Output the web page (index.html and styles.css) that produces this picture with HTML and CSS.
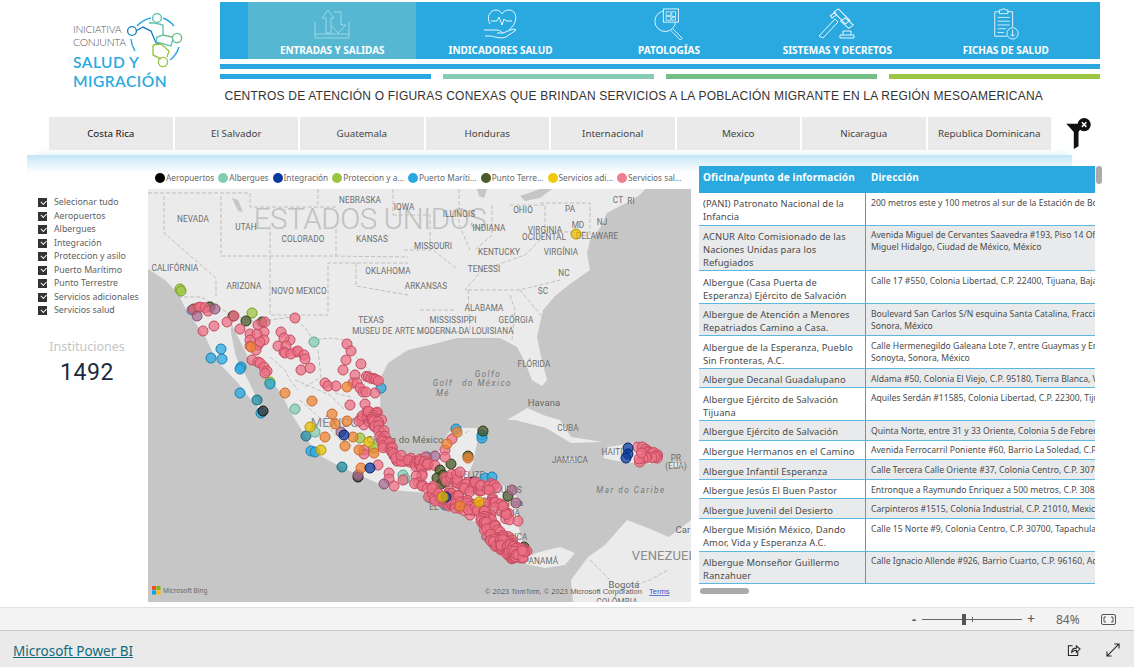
FILE: index.html
```html
<!DOCTYPE html>
<html lang="es">
<head>
<meta charset="utf-8">
<title>Iniciativa Conjunta Salud y Migración</title>
<link rel="stylesheet" href="styles.css">
</head>
<body>
<main class="report">
  <header class="top">
    <div class="logo">
      <div class="logo-small">
        <span>INICIATIVA</span>
        <span>CONJUNTA</span>
      </div>
      <div class="logo-big">
        <span>SALUD Y</span>
        <span>MIGRACIÓN</span>
      </div>
      <svg class="logo-mark" viewBox="0 0 56 56" fill="none" stroke-width="1.4">
        <path d="M10 13A26 26 0 0 1 24 5" stroke="#29a9e0"/>
        <path d="M36 5A26 26 0 0 1 47 13" stroke="#29a9e0"/>
        <path d="M52 34A26 26 0 0 1 43 47" stroke="#29a9e0"/>
        <path d="M8 38A26 26 0 0 1 4 26" stroke="#29a9e0"/>
        <circle cx="5" cy="18" r="4.4" stroke="#1f7fc4"/>
        <circle cx="30" cy="5" r="4.4" stroke="#5fc2b0"/>
        <circle cx="50" cy="25" r="4.6" stroke="#6cb98a"/>
        <circle cx="36" cy="49" r="4.6" stroke="#9bc646"/>
        <path d="M9 18L16 14L24 18L29 30L34 31" stroke="#1f7fc4"/>
        <path d="M22 10L28 10L36 12L36 22L30 24L29 29L44 33L46 26" stroke="#5fc2b0"/>
        <path d="M36 22L45 24" stroke="#6cb98a"/>
        <path d="M26 32L26 42L34 46M26 32L34 31L42 38L40 44" stroke="#9bc646"/>
      </svg>
    </div>
    <div class="head">
      <nav class="nav">
        <a class="nav-item is-active">
          <svg class="nav-icon" viewBox="0 0 36 30" fill="none" stroke="currentColor">
            <path d="M1 13V29H35V13M1 25H35"/>
            <path d="M12 24V9H8L14 1L20 9H17V24Z"/>
            <path d="M20 3H27V16H32L24 24L18 17"/>
          </svg>
          <span>ENTRADAS Y SALIDAS</span>
        </a>
        <a class="nav-item">
          <svg class="nav-icon" viewBox="0 0 36 30" fill="none" stroke="currentColor">
            <path d="M7 15C3 8 7 1 13 1C16 1 18 3 19 5C20 3 22 1 26 1C32 1 35 8 31 15C30 17 28 19 26 21"/>
            <path d="M8 12H14L16 8L19 16L21 10L23 12H29"/>
            <path d="M1 21H13C16 21 18 22 20 24H14M20 24L30 20L33 21L23 28C18 30 12 28 8 27H2"/>
          </svg>
          <span>INDICADORES SALUD</span>
        </a>
        <a class="nav-item">
          <svg class="nav-icon" viewBox="0 0 32 34" fill="none" stroke="currentColor">
            <circle cx="12" cy="14" r="11"/>
            <path d="M20 22L22 24L30 32L28 34L20 26L18 24"/>
            <rect x="10" y="1" width="16" height="14" fill="#29a9e0"/>
            <path d="M13 4H18V8H13ZM19 4H23V9H19ZM13 9H18V13H13ZM19 10H23V13H19Z" stroke-width=".8"/>
          </svg>
          <span>PATOLOGÍAS</span>
        </a>
        <a class="nav-item">
          <svg class="nav-icon" viewBox="0 0 36 30" fill="none" stroke="currentColor">
            <path d="M14 4L18 0L31 10L27 14ZM11 8L15 4L17 6L13 10ZM22 12L26 8L35 14L31 18Z" transform="rotate(8 20 10)"/>
            <path d="M16 10L19 13L4 29L0 27Z"/>
            <path d="M21 26H35V29H21ZM24 26V22H32V26"/>
          </svg>
          <span>SISTEMAS Y DECRETOS</span>
        </a>
        <a class="nav-item">
          <svg class="nav-icon" viewBox="0 0 30 34" fill="none" stroke="currentColor">
            <path d="M16 30H3V4H8M17 4H22V20"/>
            <path d="M8 6V2H11C11 0 14 0 14 2H17V6Z"/>
            <path d="M6 10H19M6 14H19M6 18H19M6 22H15M6 26H13" stroke-width=".9"/>
            <circle cx="22" cy="27" r="6"/>
            <path d="M22 23V30M20 28L22 30L24 28"/>
          </svg>
          <span>FICHAS DE SALUD</span>
        </a>
      </nav>
      <div class="rule rule-full"></div>
      <div class="rule-set">
        <div class="rule c-blue"></div>
        <div class="rule c-teal"></div>
        <div class="rule c-green"></div>
        <div class="rule c-lime"></div>
      </div>
      <h1 class="title">CENTROS DE ATENCIÓN O FIGURAS CONEXAS QUE BRINDAN SERVICIOS A LA POBLACIÓN MIGRANTE EN LA REGIÓN MESOAMERICANA</h1>
    </div>
  </header>

  <section class="band">
    <div class="tabs">
      <button class="tab tab-first">Costa Rica</button>
      <button class="tab">El Salvador</button>
      <button class="tab">Guatemala</button>
      <button class="tab">Honduras</button>
      <button class="tab">Internacional</button>
      <button class="tab">Mexico</button>
      <button class="tab">Nicaragua</button>
      <button class="tab">Republica Dominicana</button>
    </div>
    <svg class="clear-filter" viewBox="0 0 28 34">
      <path d="M1 6H20L14 15V30L9 33V15Z" fill="#111"/>
      <circle cx="20" cy="7" r="7" fill="#111"/>
      <path d="M17.6 4.6L22.4 9.4M22.4 4.6L17.6 9.4" stroke="#fff" stroke-width="1.6"/>
    </svg>
  </section>

  <section class="content">
    <aside class="side">
      <ul class="slicer">
        <li class="check">Selecionar tudo</li>
        <li class="check">Aeropuertos</li>
        <li class="check">Albergues</li>
        <li class="check">Integración</li>
        <li class="check">Proteccion y asilo</li>
        <li class="check">Puerto Marítimo</li>
        <li class="check">Punto Terrestre</li>
        <li class="check">Servicios adicionales</li>
        <li class="check">Servicios salud</li>
      </ul>
      <div class="kpi">
        <div class="kpi-label">Instituciones</div>
        <div class="kpi-value">1492</div>
      </div>
    </aside>

    <div class="mapcol">
      <ul class="legend">
        <li class="leg"><i class="swatch k-air"></i>Aeropuertos</li>
        <li class="leg"><i class="swatch k-alb"></i>Albergues</li>
        <li class="leg"><i class="swatch k-int"></i>Integración</li>
        <li class="leg"><i class="swatch k-pro"></i>Proteccion y a...</li>
        <li class="leg"><i class="swatch k-pue"></i>Puerto Maríti...</li>
        <li class="leg"><i class="swatch k-ter"></i>Punto Terre...</li>
        <li class="leg"><i class="swatch k-adi"></i>Servicios adi...</li>
        <li class="leg"><i class="swatch k-sal"></i>Servicios sal...</li>
      </ul>
      <svg id="map" class="map" viewBox="148 189 543 413">
        <rect x="148" y="189" width="543" height="413" class="water"/>
        <path class="land" d="M148 189H645L643 192L633 200L620 206L607 213L600 228L590 240L587 253L590 270L570 284L555 296L543 310L537 337L540 352L547 380L542 386L532 380L525 362L517 347L500 338L457 338L430 345L408 350L388 363L381 377L380 395L381 430L395 450L403 457L427 457L440 450L448 433L457 428L477 428L477 443L473 463L467 477L487 480L507 487L517 497L518 525L523 543L523 557L547 550L560 547L575 553L565 565L545 568L530 565L520 563L493 543L477 523L447 507L427 493L391 490L375 482L341 467L315 453L308 440L291 413L281 393L268 377L248 357L231 323L231 333L236 357L248 380L261 407L261 411L251 400L238 383L216 360L206 338L186 310L178 293L165 280L148 269Z"/>
        <path class="land" d="M573 602L571 580L588 557L605 545L627 520L648 528L669 537L691 520V602Z"/>
        <path class="land" d="M507 420L527 408L546 416L560 420L571 437L603 442L571 443L546 428L515 420Z"/>
        <path class="land" d="M603 458L608 447L634 443L662 456L650 464L625 462L612 460Z"/>
        <path class="land" d="M562 458L574 458L576 462L565 462Z"/>
        <path class="land" d="M670 463L683 463L683 467L670 467Z"/>
        <path class="lake" d="M477 189H487L484 198L479 196Z"/>
        <path class="lake" d="M520 196L540 189H552L540 198L525 201Z"/>
        <path class="lake" d="M232 198L238 200L243 212L238 211Z"/>
        <g class="borders">
          <path d="M148 193H250V207H336M318 189V206M164 196V233L216 278V296M221 196V256H328L408 257M270 226V315H328V263H408M336 229V256M356 263V286L408 295M393 189V215M393 215H430V250"/>
          <path d="M178 297H201L228 313L258 323L270 320L291 317L305 327L313 340L330 338L345 340L358 360L375 375"/>
          <path d="M404 250L433 250L456 268M459 189V225L470 250M492 205V235L475 250M510 205H545V235L525 255L482 270L465 290H520L560 280M510 295L515 310L512 340M468 290L470 332M520 290L545 320M420 310H455M420 332H470M540 203H590V235M552 232H590"/>
          <path d="M270 357L285 370L290 380L298 390M318 350L321 377L305 387M335 393L351 397M300 400L322 420L340 440L370 455M295 380L330 395L345 410M410 470L425 485L445 497M462 470L458 495M485 490L470 505M505 540L490 520M540 565L525 545M590 560L620 590L650 580L668 570M455 440L470 430"/>
        </g>
        <text class="lbl-huge" x="370" y="229">ESTADOS UNIDOS</text>
        <g id="labels" class="lbl"></g>
        <g id="pins"></g>
        <rect x="152" y="586" width="4" height="4" fill="#f25022"/>
        <rect x="156.500" y="586" width="4" height="4" fill="#7fba00"/>
        <rect x="152" y="590.500" width="4" height="4" fill="#00a4ef"/>
        <rect x="156.500" y="590.500" width="4" height="4" fill="#ffb900"/>
        <text class="bing" x="163" y="593">Microsoft Bing</text>
        <text class="copy" x="485" y="594">© 2023 TomTom, © 2023 Microsoft Corporation</text>
        <text class="terms" x="649" y="594">Terms</text>
      </svg>
    </div>

    <div class="tablecol">
      <div class="table">
        <div class="row row-head"><div class="c1">Oficina/punto de información</div><div class="c2">Dirección</div></div>
        <div class="row"><div class="c1">(PANI) Patronato Nacional de la Infancia</div><div class="c2">200 metros este y 100 metros al sur de la Estación de Bomberos</div></div>
        <div class="row alt"><div class="c1">ACNUR Alto Comisionado de las Naciones Unidas para los Refugiados</div><div class="c2">Avenida Miguel de Cervantes Saavedra #193, Piso 14 Oficina 1402<br>Miguel Hidalgo, Ciudad de México, México</div></div>
        <div class="row"><div class="c1">Albergue (Casa Puerta de Esperanza) Ejército de Salvación</div><div class="c2">Calle 17 #550, Colonia Libertad, C.P. 22400, Tijuana, Baja California</div></div>
        <div class="row alt"><div class="c1">Albergue de Atención a Menores Repatriados Camino a Casa.</div><div class="c2">Boulevard San Carlos S/N esquina Santa Catalina, Fraccionamiento<br>Sonora, México</div></div>
        <div class="row"><div class="c1">Albergue de la Esperanza, Pueblo Sin Fronteras, A.C.</div><div class="c2">Calle Hermenegildo Galeana Lote 7, entre Guaymas y Emiliano Zapata<br>Sonoyta, Sonora, México</div></div>
        <div class="row alt"><div class="c1">Albergue Decanal Guadalupano</div><div class="c2">Aldama #50, Colonia El Viejo, C.P. 95180, Tierra Blanca, Veracruz</div></div>
        <div class="row"><div class="c1">Albergue Ejército de Salvación Tijuana</div><div class="c2">Aquiles Serdán #11585, Colonia Libertad, C.P. 22300, Tijuana, Baja</div></div>
        <div class="row alt"><div class="c1">Albergue Ejército de Salvación</div><div class="c2">Quinta Norte, entre 31 y 33 Oriente, Colonia 5 de Febrero, Puebla</div></div>
        <div class="row"><div class="c1">Albergue Hermanos en el Camino</div><div class="c2">Avenida Ferrocarril Poniente #60, Barrio La Soledad, C.P. 70110</div></div>
        <div class="row alt"><div class="c1">Albergue Infantil Esperanza</div><div class="c2">Calle Tercera Calle Oriente #37, Colonia Centro, C.P. 30700, Tapachula</div></div>
        <div class="row"><div class="c1">Albergue Jesús El Buen Pastor</div><div class="c2">Entronque a Raymundo Enriquez a 500 metros, C.P. 30820, Tapachula</div></div>
        <div class="row alt"><div class="c1">Albergue Juvenil del Desierto</div><div class="c2">Carpinteros #1515, Colonia Industrial, C.P. 21010, Mexicali, Baja</div></div>
        <div class="row"><div class="c1">Albergue Misión México, Dando Amor, Vida y Esperanza A.C.</div><div class="c2">Calle 15 Norte #9, Colonia Centro, C.P. 30700, Tapachula, Chiapas</div></div>
        <div class="row alt"><div class="c1">Albergue Monseñor Guillermo Ranzahuer</div><div class="c2">Calle Ignacio Allende #926, Barrio Cuarto, C.P. 96160, Acayucan</div></div>
      </div>
      <div class="vscroll"></div>
      <div class="hscroll"></div>
    </div>
  </section>
</main>

<div class="zoombar">
  <span class="zoom-minus">-</span>
  <div class="slider"><i class="slider-mid"></i><i class="slider-thumb"></i></div>
  <span class="zoom-plus">+</span>
  <span class="zoom-value">84%</span>
  <svg class="fit" viewBox="0 0 15 11" fill="none" stroke="#555">
    <rect x=".5" y=".5" width="14" height="10" rx="1.500"/>
    <path d="M5 3H3V8H5M10 3H12V8H10"/>
  </svg>
</div>

<footer class="footer">
  <a class="pbi">Microsoft Power BI</a>
  <div class="foot-icons">
    <svg class="foot-icon" viewBox="0 0 15 15" fill="none" stroke="#222" stroke-width="1.100">
      <path d="M6 3H1.500V13.500H11.500V9"/>
      <path d="M5 10C5 7 7 5.500 10 5.500V3L14 6.500L10 10V7.800C8 7.800 6.500 8.500 5 10Z"/>
    </svg>
    <svg class="foot-icon" viewBox="0 0 15 15" fill="none" stroke="#222" stroke-width="1.100">
      <path d="M1 14L14 1M9 1H14V6M1 9V14H6"/>
    </svg>
  </div>
</footer>
<script src="map.js"></script>
</body>
</html>
```
FILE: styles.css
```css
* { box-sizing: border-box; }
html, body { margin: 0; padding: 0; }
body {
  width: 1134px;
  height: 667px;
  overflow: hidden;
  background: #fff;
  font-family: "Noto Sans", "Open Sans", sans-serif;
  display: flex;
  flex-direction: column;
}
ul { list-style: none; margin: 0; padding: 0; }

.report { height: 607px; display: flex; flex-direction: column; overflow: hidden; }

/* header */
.top { display: flex; height: 117px; padding-top: 2px; }
.logo { width: 220px; position: relative; padding: 21px 0 0 73px; }
.logo-small span {
  display: block;
  font: 300 10.5px/13px "Lato", sans-serif;
  color: #555;
  letter-spacing: -.3px;
}
.logo-big { margin-top: 4px; }
.logo-big span {
  display: block;
  font: 600 15.5px/18.500px "Lato", sans-serif;
  color: #29a9e0;
  letter-spacing: .5px;
}
.logo-mark { position: absolute; left: 127px; top: 11px; width: 56px; height: 56px; }

.head { width: 880px; }
.nav {
  height: 57px;
  background: #29a9e0;
  padding-left: 28px;
  display: flex;
}
.nav-item {
  width: 168.4px;
  display: flex;
  flex-direction: column;
  align-items: center;
  color: #fff;
  font-size: 10px;
  font-weight: 700;
  line-height: 12px;
}
.nav-item span { margin-top: auto; padding-bottom: 3px; letter-spacing: -.05px; white-space: nowrap; }
.nav-item.is-active { background: #55b7d1; }
.nav-icon { width: 36px; height: 32px; margin-top: 6px; stroke-width: 1; opacity: .9; }
.is-active .nav-icon { color: #a5dbe6; }

.rule { height: 5px; }
.rule-full { background: #29a9e0; margin-top: 5px; }
.rule-set { display: flex; justify-content: space-between; margin-top: 5px; }
.rule-set .rule { flex: 0 0 211px; }
.c-blue { background: #29a9e0; }
.c-teal { background: #85cbb6; }
.c-green { background: #73bf85; }
.c-lime { background: #9dc544; }
.title {
  margin: 9.500px 0 0 4.500px;
  font: 400 12px/15px "Liberation Sans", Arial, sans-serif;
  color: #333;
  white-space: nowrap;
  letter-spacing: .22px;
}

/* tab band */
.band {
  position: relative;
  height: 38px;
  padding-left: 49px;
  display: flex;
}
.band::after {
  content: "";
  position: absolute;
  left: 27px;
  top: 38px;
  width: 1045px;
  height: 18px;
  background: linear-gradient(#c4e6f5, #fff);
  box-shadow: 4px -6px 8px -6px #cfeaf6;
  z-index: -1;
}
.tabs {
  width: 1002px;
  height: 32px;
  display: grid;
  grid-template-columns: repeat(8, 1fr);
  column-gap: 2px;
}
.tab {
  border: 0;
  padding: 1px 0 0;
  background: #eaeaea;
  color: #444;
  font: 400 9.800px/32px "Noto Sans", sans-serif;
  white-space: nowrap;
}
.tab-first { color: #111; }
.clear-filter { width: 27px; height: 32px; margin: 1px 0 0 14px; }

/* content */
.content { display: flex; margin-top: 11px; height: 441px; }
.side { width: 148px; padding-top: 30px; }
.slicer { padding-left: 38px; }
.check {
  position: relative;
  height: 13.500px;
  padding-left: 16px;
  font-size: 8.800px;
  line-height: 13.500px;
  color: #606060;
  white-space: nowrap;
}
.check::before {
  content: "";
  position: absolute;
  left: 0;
  top: 2px;
  width: 9px;
  height: 9px;
  background: #333;
}
.check::after {
  content: "";
  position: absolute;
  left: 2.500px;
  top: 3.500px;
  width: 4px;
  height: 2.500px;
  border-left: 1px solid #fff;
  border-bottom: 1px solid #fff;
  transform: rotate(-45deg);
}
.kpi { margin-top: 21px; text-align: center; width: 174px; }
.kpi-label { font-size: 12.500px; line-height: 16px; color: #c4c4c4; }
.kpi-value {
  font: 400 23px/32px "Roboto", sans-serif;
  color: #1c2a40;
  letter-spacing: .6px;
  margin-top: 2px;
}

.mapcol { width: 543px; }
.legend {
  height: 23px;
  padding: 5px 0 0 7px;
  display: flex;
  white-space: nowrap;
}
.leg {
  display: flex;
  align-items: center;
  height: 13px;
  margin-right: 4px;
  font-size: 8.250px;
  color: #666;
}
.swatch { width: 10px; height: 10px; border-radius: 50%; margin-right: 1px; }
.k-air { background: #000; }
.k-alb { background: #85cbb6; }
.k-int { background: #0a3a9e; }
.k-pro { background: #9dc544; }
.k-pue { background: #29a9e0; }
.k-ter { background: #4a5a28; }
.k-adi { background: #f2c80f; }
.k-sal { background: #ee7f90; }

.map { display: block; width: 543px; height: 413px; }
.water { fill: #c6c6c6; }
.land { fill: #ebebeb; }
.lake { fill: #c6c6c6; }
.borders path { fill: none; stroke: #b4b4b4; stroke-width: .8; stroke-dasharray: 4 2; }
.lbl text { font: 400 8.200px "Roboto", sans-serif; fill: #6e6e6e; text-anchor: middle; letter-spacing: .1px; }
.lbl .sea { font-style: italic; letter-spacing: 1.500px; fill: #777; }
.lbl .big { font-size: 13px; fill: #8a8a8a; }
.lbl .city { font-size: 9.500px; fill: #666; }
.lbl-huge { font: 300 29.500px "Roboto", sans-serif; fill: #c0c0c0; text-anchor: middle; letter-spacing: -.4px; }
.bing { font: 400 6.500px "Noto Sans", sans-serif; fill: #666; }
.copy { font: 400 7.500px "Liberation Sans", sans-serif; fill: #333; stroke: #fff; stroke-width: .1; }
.terms { font: 400 7.500px "Liberation Sans", sans-serif; fill: #3355cc; text-decoration: underline; }

.pin { fill-opacity: .75; stroke-width: 1; }
.p-sal { fill: #ec7084; stroke: #c44c60; }
.p-pue { fill: #29a9e0; stroke: #1780b0; }
.p-ter { fill: #4a5a28; stroke: #2d3a14; }
.p-int { fill: #0a3a9e; stroke: #04246e; }
.p-pro { fill: #9dc544; stroke: #78a020; }
.p-alb { fill: #85cbb6; stroke: #5fa890; }
.p-adi { fill: #e8bc00; stroke: #b89400; }
.p-ora { fill: #ee8434; stroke: #cc6a28; }
.p-pur { fill: #a86c90; stroke: #84506c; }
.p-tea { fill: #1f8aa0; stroke: #146a7c; }
.p-drk { fill: #333; stroke: #111; }

/* table */
.tablecol { position: relative; margin-left: 8px; width: 396px; }
.table { width: 396px; overflow: hidden; }
.row {
  display: grid;
  grid-template-columns: 167px 229px;
  border-bottom: 1px solid #5cb8e2;
  background: #fff;
}
.row.alt { background: #e9eaec; }
.c1 {
  padding: 4.400px 5px 1.200px 4px;
  font-size: 9.400px;
  line-height: 13px;
  color: #4a4a4a;
  letter-spacing: .1px;
  border-right: 1px solid #3aa5da;
}
.c2 {
  padding: 3.800px 0 0 5px;
  font-size: 8.600px;
  line-height: 12px;
  color: #4a4a4a;
  white-space: nowrap;
  overflow: hidden;
}
.row-head {
  height: 27px;
  background: #29a9e0;
  border-bottom: 0;
  color: #fff;
  font-weight: 700;
}
.row-head .c1, .row-head .c2 {
  padding: 4px 0 0 4px;
  font-size: 10px;
  line-height: 14px;
  color: #fff;
  border: 0;
  letter-spacing: .15px;
}
.row-head .c2 { padding-left: 5px; }
.vscroll {
  position: absolute;
  left: 397px;
  top: 0;
  width: 6px;
  height: 18px;
  border-radius: 3px;
  background: #aaa;
}
.hscroll {
  position: absolute;
  left: 1px;
  top: 422px;
  width: 49px;
  height: 6px;
  border-radius: 3px;
  background: #aaa;
}

/* bottom bars */
.zoombar {
  height: 24px;
  background: #f3f3f3;
  border-top: 1px solid #e0e0e0;
  border-bottom: 1px solid #c8c8c8;
  display: flex;
  align-items: center;
  padding-left: 912px;
  color: #555;
}
.zoom-minus { width: 10px; font-size: 13px; font-weight: 700; line-height: 20px; }
.slider { position: relative; width: 100px; height: 1px; background: #666; }
.slider-mid { position: absolute; left: 50px; top: -2px; width: 1px; height: 5px; background: #666; }
.slider-thumb { position: absolute; left: 40px; top: -5px; width: 4px; height: 11px; background: #555; }
.zoom-plus { margin-left: 5px; width: 29px; font-size: 14px; line-height: 20px; }
.zoom-value { width: 45px; font-size: 12px; color: #666; }
.fit { width: 15px; height: 11px; margin-left: 0; }
.footer {
  flex: 1;
  background: #eaeaea;
  display: flex;
  align-items: center;
  justify-content: space-between;
  padding: 3px 14px 0 13px;
}
.pbi { font-size: 13.500px; color: #106c7a; text-decoration: underline; }
.foot-icons { display: flex; gap: 25px; margin-top: -2px; }
.foot-icon { width: 14px; height: 14px; display: block; }
```
FILE: map.js
```js
(function () {
  var NS = "http://www.w3.org/2000/svg";
  var labels = [
    ["NEVADA",193,222],["UTAH",246,230],["COLORADO",303,242],["KANSAS",372,242],["NEBRASKA",360,203],
    ["OKLAHOMA",388,274],["CALIFÓRNIA",175,271],["ARIZONA",244,289],["NOVO MEXICO",299,294],["TEXAS",371,323],
    ["MUSEU DE ARTE MODERNA DA LOUISIANA",433,334],["MISSOURI",433,249],["ILLINOIS",459,217],["INDIANA",489,231],
    ["OHIO",523,213],["PA",570,212],["MD",578,228],["NJ",602,225],["CT",618,203],["RI",631,204],["DELAWARE",597,239],
    ["VIRGINIA",545,233],["OCIDENTAL",544,240],["KENTUCKY",499,255],["VIRGÍNIA",561,255],["TENESSI",484,272],
    ["NC",564,276],["ARKANSAS",426,289],["SC",543,294],["ALABAMA",484,311],["MISSISSIPPI",453,323],["GEÓRGIA",516,323],
    ["FLÓRIDA",534,367],["IOWA",404,210],["CUBA",568,431],["HAITI",612,455],["JAMAICA",570,463],["PR",676,461],
    ["(EUA)",676,469],["BELIZE",471,478],["HONDURAS",500,493],["EL",434,510],["NICARAGUA",497,516],["COSTA RICA",504,540],
    ["PANAMÁ",541,564],["COLÔMBIA",617,605]
  ];
  var extra = [
    ["Golfo",488,377,"sea"],["Golf",443,386,"sea"],["do México",487,386,"sea"],["Mé",443,396,"sea"],["Mar do Caribe",631,493,"sea"],
    ["VENEZUELA",668,560,"big"],["MÉXICO",335,427,"big"],["Cidade do México",405,443,"city"],["Havana",544,406,"city"],
    ["Tegucigalpa",497,506,"city"],["Bogotá",624,588,"city"],["Car",683,533,"city"]
  ];
  var lg = document.getElementById("labels");
  function addLabel(l) {
    var t = document.createElementNS(NS, "text");
    t.setAttribute("x", l[1]);
    t.setAttribute("y", l[2]);
    if (l[3]) t.setAttribute("class", l[3]);
    t.textContent = l[0];
    lg.appendChild(t);
  }
  labels.forEach(addLabel);
  extra.forEach(addLabel);

  var g = document.getElementById("pins");
  function pin(x, y, k) {
    var c = document.createElementNS(NS, "circle");
    c.setAttribute("cx", x.toFixed(1));
    c.setAttribute("cy", y.toFixed(1));
    c.setAttribute("r", "5");
    c.setAttribute("class", "pin p-" + k);
    g.appendChild(c);
  }
  function many(k, pts) { for (var i = 0; i < pts.length; i += 2) pin(pts[i], pts[i + 1], k); }

  var seed = 12345;
  function rnd() { seed = (seed * 16807) % 2147483647; return seed / 2147483647 - .5; }
  function chain(path, step, spread) {
    for (var i = 0; i < path.length - 2; i += 2) {
      var dx = path[i + 2] - path[i], dy = path[i + 3] - path[i + 1];
      var len = Math.sqrt(dx * dx + dy * dy), n = Math.max(1, Math.round(len / step));
      for (var j = 0; j < n; j++) {
        pin(path[i] + dx * j / n + rnd() * spread, path[i + 1] + dy * j / n + rnd() * spread, "sal");
      }
    }
  }

  many("pro", [180,289, 181,291, 252,313, 270,382, 360,438, 374,448]);
  many("pue", [192,310, 221,349, 211,358, 222,359, 241,367, 240,369, 240,393, 381,388, 311,451, 315,452, 427,457, 456,429, 482,435, 482,438, 473,487, 485,478, 492,477, 431,498, 445,505, 261,413, 270,384]);
  many("drk", [263,411, 358,477]);
  many("ter", [194,309, 210,307, 233,316, 246,321, 262,322, 451,464, 483,431, 468,456, 508,496, 524,547]);
  many("tea", [257,400, 306,436, 342,467]);
  many("alb", [314,342, 295,409, 315,432, 403,475, 405,479]);

  chain([194,309, 208,307], 4, 2);
  many("sal", [208,311, 203,331, 214,326, 227,322, 234,316, 240,329, 250,334, 250,340, 250,346, 258,325, 265,322, 264,332, 264,340, 257,334, 258,345, 260,342, 256,350, 295,318,
    281,332, 290,340, 284,338, 278,346, 286,346, 284,352, 296,352, 285,353, 291,354, 298,351, 304,355, 305,359, 301,370, 310,368,
    252,360, 258,362, 260,363, 264,367, 267,371, 265,373, 347,344, 351,351, 346,360, 343,370, 361,364, 355,375, 375,393,
    325,383, 328,386, 336,386, 353,383, 357,383, 360,388, 363,392, 366,392, 350,405, 365,404, 378,465, 389,473, 389,479, 394,486, 403,480, 364,450, 364,454, 452,439, 445,450, 445,457]);
  chain([366,376, 381,382], 2.5, 1);
  many("pur", [197,316, 215,309, 341,432, 384,484, 435,456, 512,490, 516,503, 358,475]);
  many("ora", [251,347, 347,387, 285,393, 312,401, 332,414, 335,424, 347,421, 325,437, 353,437, 345,446, 359,450, 374,453, 361,468, 457,432, 447,444, 468,458, 431,495]);
  many("adi", [576,234, 310,427, 321,450, 369,442]);
  many("int", [344,435, 370,468, 473,482]);

  chain([357,422, 367,416, 375,413, 377,420, 378,430, 385,443, 392,455, 399,458, 410,462, 422,462, 434,468], 1.500, 10);
  chain([422,475, 415,480, 425,488], 3, 6);
  many("ter", [440,470, 443,475, 437,478, 445,482, 441,484]);
  chain([444,480, 455,478, 465,487, 480,487, 492,487, 495,500, 500,510, 512,520], 1.800, 10);
  chain([432,492, 447,500, 462,503, 478,510, 490,525, 500,540, 510,548, 522,556], .8, 15);
  chain([495,537, 505,545, 522,556], .5, 11);
  many("sal", [503,506, 518,521, 460,472]);
  chain([638,448, 645,449, 652,452, 659,457, 654,458, 645,458, 640,461, 641,451], 3, 3);

  many("int", [628,448, 628,454, 626,458, 446,497]);
  many("ora", [460,506]);
  many("adi", [443,497, 479,502]);
})();
```
